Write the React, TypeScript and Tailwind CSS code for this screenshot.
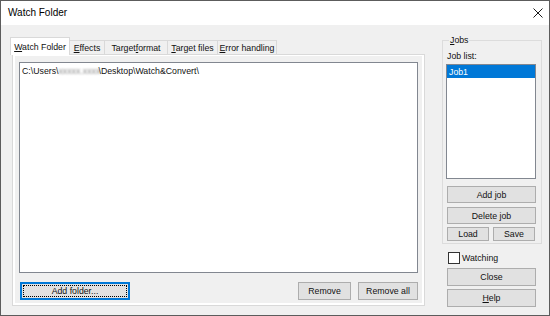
import React from "react";

function Btn({ children, className = "" }: { children: React.ReactNode; className?: string }) {
  return (
    <div className={"flex items-center justify-center bg-[#e1e1e1] border border-[#adadad] shrink-0 " + className}>
      {children}
    </div>
  );
}

function Tab({ children, className = "" }: { children: React.ReactNode; className?: string }) {
  return (
    <div className={"h-[14px] flex items-center justify-center border-t border-r border-[#d9d9d9] bg-[#f0f0f0] shrink-0 whitespace-nowrap " + className}>
      {children}
    </div>
  );
}

export default function App() {
  return (
    <div className="w-[550px] h-[316px] border border-[#5c5c5c] bg-[#f0f0f0] flex flex-col font-['Liberation_Sans',Arial,sans-serif] text-[8.75px] leading-[10px] text-[#111] overflow-hidden">
      {/* Title bar */}
      <div className="h-[24px] bg-white flex items-center justify-between pl-[7px] pr-[6px] shrink-0">
        <span className="text-[10px] leading-[12px] text-black">Watch Folder</span>
        <svg width="10" height="10" viewBox="0 0 10 10">
          <path d="M0.5 0.5 L9.5 9.5 M9.5 0.5 L0.5 9.5" stroke="#1a1a1a" strokeWidth="1" fill="none" />
        </svg>
      </div>

      {/* Body */}
      <div className="flex-1 flex">
        {/* Left: tab control */}
        <div className="ml-[9px] pt-[12px] w-[415px] flex flex-col shrink-0">
          <div className="h-[17px] flex items-end">
            <div className="relative z-10 h-[18px] -mb-px w-[60px] bg-white border-t border-l border-r border-[#d9d9d9] flex items-center justify-center shrink-0 whitespace-nowrap">
              <span>
                <span className="underline underline-offset-[1px]">W</span>atch Folder
              </span>
            </div>
            <Tab className="w-[35px]">
              <span>
                <span className="underline underline-offset-[1px]">E</span>ffects
              </span>
            </Tab>
            <Tab className="w-[63px]">
              <span>
                Target<span className="underline underline-offset-[1px]">f</span>ormat
              </span>
            </Tab>
            <Tab className="w-[50px]">
              <span>
                <span className="underline underline-offset-[1px]">T</span>arget files
              </span>
            </Tab>
            <Tab className="w-[59px]">
              <span>
                <span className="underline underline-offset-[1px]">E</span>rror handling
              </span>
            </Tab>
          </div>
          <div className="ml-[2px] w-[413px] h-[252px] border border-[#d9d9d9] bg-white pt-[1px] px-[2px] pb-[2px]">
            <div className="h-full bg-[#f0f0f0] flex flex-col px-[4px] pt-[6px]">
              <div className="h-[211px] border border-[#828790] bg-white pt-[2px] pl-[2px] shrink-0">
                <div className="h-[12px] flex items-center whitespace-nowrap">
                  C:\Users\
                  <span className="inline-block w-[40px] text-[#8a8a8a] blur-[1.2px]">xxxxx.xxxx</span>
                  \Desktop\Watch&amp;Convert\
                </div>
              </div>
              <div className="mt-[9px] h-[18px] flex">
                <div className="relative ml-[1px] w-[110px] h-[18px] flex items-center justify-center bg-[#e1e1e1] border-2 border-[#0078d7] shrink-0">
                  <div className="absolute inset-[1px] border border-dotted border-black"></div>
                  Add folder...
                </div>
                <div className="flex-1"></div>
                <Btn className="w-[53px] h-[18px]">Remove</Btn>
                <Btn className="ml-[7px] w-[60px] h-[18px]">Remove all</Btn>
              </div>
            </div>
          </div>
        </div>

        {/* Right column */}
        <div className="ml-[17px] pt-[10px] w-[100px] flex flex-col shrink-0">
          <fieldset className="w-[100px] border border-[#dcdcdc] px-[3px] pb-[2px]">
            <legend className="ml-[3px] px-[1px] leading-[10px]">
              <span className="underline underline-offset-[1px]">J</span>obs
            </legend>
            <div className="mt-[6px] ml-[1px] h-[10px]">Job list:</div>
            <div className="mt-[3px] w-[90px] h-[115px] border border-[#828790] bg-white">
              <div className="h-[13px] bg-[#0078d7] text-white pl-[2px] flex items-center">Job1</div>
            </div>
            <Btn className="mt-[7px] ml-[1px] w-[89px] h-[17px]">Add job</Btn>
            <Btn className="mt-[4px] ml-[1px] w-[89px] h-[17px]">Delete job</Btn>
            <div className="mt-[3px] ml-[1px] flex">
              <Btn className="w-[42px] h-[14px]">Load</Btn>
              <Btn className="ml-[4px] w-[42px] h-[14px]">Save</Btn>
            </div>
          </fieldset>
          <div className="mt-[8px] ml-[6px] h-[12px] flex items-center">
            <div className="w-[12px] h-[12px] border border-[#333333] bg-white shrink-0"></div>
            <span className="ml-[2px]">Watching</span>
          </div>
          <Btn className="mt-[4px] ml-[5px] w-[89px] h-[18px]">Close</Btn>
          <Btn className="mt-[3px] ml-[5px] w-[89px] h-[18px]">
            <span>
              <span className="underline underline-offset-[1px]">H</span>elp
            </span>
          </Btn>
        </div>
      </div>
    </div>
  );
}
